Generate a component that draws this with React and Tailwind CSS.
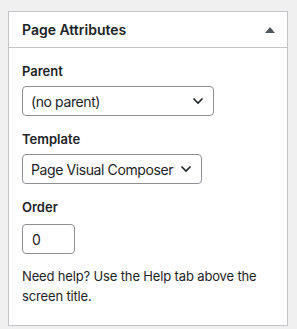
import React from 'react';

const Chevron = () => (
  <svg width="12" height="8" viewBox="0 0 12 8" fill="none" className="shrink-0">
    <path d="M1.5 1.5 6 6l4.5-4.5" stroke="#1d2327" strokeWidth="1.6" />
  </svg>
);

const App = () => {
  return (
    <div className="w-[297px] h-[329px] bg-[#f0f0f1] pt-[11px] px-[8px] font-['Inter',sans-serif] text-[#1d2327]">
      <div className="w-[280px] bg-white border border-[#c3c4c7]">
        <div className="h-[36px] border-b border-[#c3c4c7] flex items-center justify-between pl-[13px] pr-[12px]">
          <h2 className="text-[14px] font-semibold">Page Attributes</h2>
          <svg width="10" height="6" viewBox="0 0 10 6">
            <path d="M0 6 5 0l5 6z" fill="#50575e" />
          </svg>
        </div>
        <div className="px-[13px] pt-[14px] pb-[19px] text-[13px]">
          <p className="font-semibold text-[13px] leading-[18px]">Parent</p>
          <div className="mt-[6px] w-[192px] h-[30px] border border-[#8c8f94] rounded-[4px] flex items-center justify-between pl-[8px] pr-[9px] text-[14px] tracking-[-0.4px]">
            <span>(no parent)</span>
            <Chevron />
          </div>
          <p className="mt-[14px] font-semibold text-[13px] leading-[18px]">Template</p>
          <div className="mt-[6px] w-[180px] h-[30px] border border-[#8c8f94] rounded-[4px] flex items-center justify-between pl-[8px] pr-[9px] text-[14px] tracking-[-0.4px]">
            <span className="whitespace-nowrap">Page Visual Composer</span>
            <Chevron />
          </div>
          <p className="mt-[14px] font-semibold text-[13px] leading-[18px]">Order</p>
          <div className="mt-[8px] w-[53px] h-[30px] border border-[#8c8f94] rounded-[4px] flex items-center pl-[9px] text-[14px]">
            0
          </div>
          <p className="mt-[13px] leading-[19.5px] tracking-[-0.15px]">Need help? Use the Help tab above the screen title.</p>
        </div>
      </div>
    </div>
  );
};

export default App;
